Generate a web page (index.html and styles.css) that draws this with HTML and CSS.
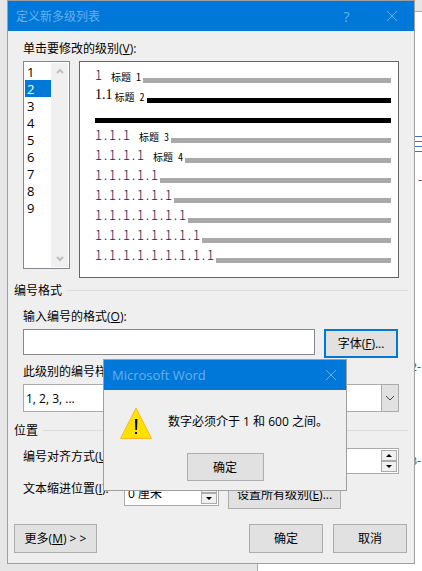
FILE: index.html
```html
<!DOCTYPE html>
<html lang="zh-CN">
<head>
<meta charset="utf-8">
<meta name="viewport" content="width=device-width, initial-scale=1">
<title>定义新多级列表</title>
<link rel="stylesheet" href="styles.css">
</head>
<body>
<div class="backdrop" aria-hidden="true">
  <div class="page-edge"></div>
  <div class="ribbon-edge"></div>
  <div class="ruled"></div>
  <span class="mark mark-1">-</span>
  <span class="mark mark-2">2-</span>
  <span class="mark mark-3">3-</span>
</div>

<main class="dialog">
  <header class="titlebar">
    <h1 class="title">定义新多级列表</h1>
    <button class="title-button help" type="button" aria-label="帮助">?</button>
    <button class="title-button" type="button" aria-label="关闭">
      <svg width="10" height="10" viewBox="0 0 10 10"><path d="M0 0L10 10M10 0L0 10" fill="none" stroke="currentColor"/></svg>
    </button>
  </header>

  <form class="content">
    <div class="group">
      <label class="label first" for="level">单击要修改的级别(<u>V</u>):</label>
      <div class="levels">
        <div class="listbox">
          <select class="list" id="level" size="9">
            <option>1</option>
            <option selected>2</option>
            <option>3</option>
            <option>4</option>
            <option>5</option>
            <option>6</option>
            <option>7</option>
            <option>8</option>
            <option>9</option>
          </select>
          <div class="scrollbar">
            <svg width="8" height="6" viewBox="0 0 8 6"><path d="M1 5L4 2L7 5" fill="none" stroke="currentColor" stroke-width="2"/></svg>
            <svg width="8" height="6" viewBox="0 0 8 6"><path d="M1 1L4 4L7 1" fill="none" stroke="currentColor" stroke-width="2"/></svg>
          </div>
        </div>
        <div class="preview">
          <div class="line"><span class="num">1</span><span class="name">标题 1</span><i class="bar"></i></div>
          <div class="line current"><span class="num">1.1</span><span class="name">标题 2</span><i class="bar"></i></div>
          <div class="line current"><i class="bar"></i></div>
          <div class="line"><span class="num">1.1.1</span><span class="name">标题 3</span><i class="bar"></i></div>
          <div class="line"><span class="num">1.1.1.1</span><span class="name">标题 4</span><i class="bar"></i></div>
          <div class="line"><span class="num">1.1.1.1.1</span><i class="bar"></i></div>
          <div class="line"><span class="num">1.1.1.1.1.1</span><i class="bar"></i></div>
          <div class="line"><span class="num">1.1.1.1.1.1.1</span><i class="bar"></i></div>
          <div class="line"><span class="num">1.1.1.1.1.1.1.1</span><i class="bar"></i></div>
          <div class="line"><span class="num">1.1.1.1.1.1.1.1.1</span><i class="bar"></i></div>
        </div>
      </div>
    </div>

    <h2 class="section">编号格式</h2>
    <div class="group">
      <label class="label" for="format">输入编号的格式(<u>O</u>):</label>
      <div class="row format">
        <input class="field grow" id="format" type="text">
        <button class="button focused" type="button">字体(<u>F</u>)...</button>
      </div>
      <label class="label" for="style">此级别的编号样式(<u>N</u>):</label>
      <div class="combo">
        <select class="combo-select" id="style"><option>1, 2, 3, ...</option></select>
        <span class="combo-arrow"><svg width="8" height="6" viewBox="0 0 8 6"><path d="M0 1L4 5L8 1" fill="none" stroke="currentColor"/></svg></span>
      </div>
    </div>

    <h2 class="section lower">位置</h2>
    <div class="group">
      <div class="row position">
        <label class="row-label" for="offset">编号对齐方式(<u>U</u>):</label>
        <div class="spinner">
          <input id="offset" type="text">
          <div class="steps">
            <button type="button" aria-label="增加"><span class="up"></span></button>
            <button type="button" aria-label="减少"><span class="down"></span></button>
          </div>
        </div>
      </div>
      <div class="row indent">
        <label class="row-label" for="indent">文本缩进位置(<u>I</u>):</label>
        <div class="spinner">
          <input id="indent" type="text" value="0 厘米">
          <div class="steps">
            <button type="button" aria-label="增加"><span class="up"></span></button>
            <button type="button" aria-label="减少"><span class="down"></span></button>
          </div>
        </div>
        <button class="button wide" type="button">设置所有级别(<u>E</u>)...</button>
      </div>
    </div>

    <footer class="footer">
      <button class="button more" type="button">更多(<u>M</u>) &gt; &gt;</button>
      <button class="button" type="button">确定</button>
      <button class="button" type="button">取消</button>
    </footer>
  </form>

  <section class="alert" role="alertdialog" aria-labelledby="alert-title" aria-describedby="alert-text">
    <header class="titlebar">
      <h2 class="title" id="alert-title">Microsoft Word</h2>
      <button class="title-button" type="button" aria-label="关闭">
        <svg width="10" height="10" viewBox="0 0 10 10"><path d="M0 0L10 10M10 0L0 10" fill="none" stroke="currentColor"/></svg>
      </button>
    </header>
    <div class="alert-body">
      <svg width="32" height="32" viewBox="0 0 32 32" aria-hidden="true">
        <path d="M16 1L31.500 31.500H.5Z" fill="#ffe100" stroke="#fdb827"/>
        <path d="M15 12h2.400l-.4 11h-1.600Z" fill="#000"/>
        <rect x="15" y="25" width="2" height="2" fill="#000"/>
      </svg>
      <p class="alert-text" id="alert-text">数字必须介于 1 和 600 之间。</p>
    </div>
    <div class="alert-actions"><button class="button" type="button">确定</button></div>
  </section>
</main>
</body>
</html>
```
FILE: styles.css
```css
* {
  box-sizing: border-box;
}

body {
  margin: 0;
  min-height: 100vh;
  position: relative;
  overflow: hidden;
  background: #fff;
  color: #000;
  font: 12px/17px "Open Sans", "Noto Sans CJK SC", sans-serif;
}

button,
input,
select {
  font: inherit;
  color: inherit;
  margin: 0;
  border-radius: 0;
}

u {
  text-underline-offset: 1px;
}

/* Document window behind the dialog */
.backdrop {
  position: absolute;
  inset: 0;
  overflow: hidden;
}

.page-edge {
  position: absolute;
  inset: 0 auto 0 0;
  width: 258px;
  background: #e6e6e6;
  border-right: 1px solid #ababab;
}

.ribbon-edge {
  position: absolute;
  inset: 0 0 auto auto;
  width: 8px;
  height: 12px;
  background: #e6e6e6;
  border-bottom: 1px solid #ababab;
}

.ruled {
  position: absolute;
  top: 136px;
  right: 0;
  width: 8px;
  height: 16px;
  background: repeating-linear-gradient(#4a6fae 0 1px, #fff 1px 5px);
}

.mark {
  position: absolute;
  left: 411px;
  color: #555;
  font-family: "Liberation Serif", serif;
}

.mark-1 { top: 172px; left: 418px; }
.mark-2 { top: 359px; }
.mark-3 { top: 453px; }

.dialog {
  position: relative;
  margin: 0 7px;
  border: 1px solid #9f9f9f;
  background: #efefef;
}

.titlebar {
  display: flex;
  align-items: center;
  height: 30px;
  padding-left: 8px;
  background: #0078d9;
  color: #67b0ea;
}

.title {
  flex: 1;
  margin: 0;
  font-size: 12px;
  font-weight: 400;
}

.alert .title {
  font-size: 13px;
}

.title-button {
  display: flex;
  align-items: center;
  justify-content: center;
  width: 45px;
  height: 30px;
  padding: 0;
  border: 0;
  background: none;
}

.help {
  font-size: 14px;
}

.content {
  padding: 9px 6px 10px;
}

.group {
  padding: 0 9px;
}

.label {
  display: block;
  margin: 9px 0 4px;
}

.label.first {
  margin-top: 0;
}

.levels {
  display: flex;
  align-items: flex-start;
  gap: 9px;
}

.listbox {
  display: flex;
  width: 47px;
  height: 208px;
  padding: 1px;
  border: 1px solid #828790;
  background: #fff;
}

.list {
  flex: 1;
  min-width: 0;
  height: 100%;
  padding: 0;
  border: 0;
  outline: 0;
  overflow: hidden;
  background: #fff;
  scrollbar-width: none;
}

.list option {
  height: 17px;
  min-height: 17px;
  padding: 0 2px;
  font-size: 13px;
  line-height: 17px;
}

.list option:checked {
  background: linear-gradient(#0078d7, #0078d7);
  -webkit-text-fill-color: #fff;
}

.scrollbar {
  display: flex;
  flex-direction: column;
  justify-content: space-between;
  align-items: center;
  width: 17px;
  padding: 5px 0;
  background: #f0f0f0;
  color: #bfbfbf;
}

.preview {
  flex: 1;
  height: 217px;
  padding: 1px 7px 0 15px;
  border: 1px solid #646464;
  background: #fff;
}

.line {
  display: flex;
  align-items: flex-end;
  gap: 2px;
  height: 20px;
}

.num,
.name {
  font-family: "Noto Sans CJK SC", sans-serif;
  font-feature-settings: "hwid";
  white-space: pre;
}

.num {
  color: #1c2450;
  font-size: 14px;
  font-weight: 300;
  line-height: 17px;
}

.name {
  margin-left: 7px;
  font-size: 10px;
  line-height: 12px;
}

.current .num {
  color: #000;
  font-family: "Liberation Serif", serif;
  font-weight: 400;
  line-height: 16px;
}

.current .name {
  margin-left: 0;
}

.bar {
  flex: 1;
  height: 5px;
  background: #a9a9a9;
}

.current .bar {
  background: #000;
}

.section {
  display: flex;
  align-items: center;
  gap: 5px;
  margin: 4px 0 9px;
  font-size: 12px;
  font-weight: 400;
}

.section::after {
  content: "";
  flex: 1;
  height: 1px;
  background: #dcdcdc;
}

.section.lower {
  margin-top: 10px;
}

.row {
  display: flex;
  align-items: flex-start;
  gap: 9px;
}

.row + .label {
  margin-top: 5px;
}

.format {
  padding-right: 1px;
}

.field {
  height: 26px;
  padding: 0 3px;
  border: 1px solid #828790;
  background: #fff;
}

.grow {
  flex: 1;
  min-width: 0;
}

.button {
  width: 74px;
  height: 29px;
  padding: 0;
  border: 1px solid #adadad;
  background: #e1e1e1;
  white-space: nowrap;
}

.button.focused {
  border: 2px solid #0078d7;
}

.button.wide {
  width: 113px;
}

.button.more {
  width: 83px;
  margin-right: auto;
}

.combo {
  position: relative;
  height: 28px;
}

.combo-select {
  width: 100%;
  height: 28px;
  padding: 0 2px;
  border: 1px solid #ababab;
  background: #fff;
  appearance: none;
}

.combo-arrow {
  position: absolute;
  inset: 0 0 0 auto;
  display: flex;
  align-items: center;
  justify-content: center;
  width: 18px;
  border: 1px solid #ababab;
  background: #e1e1e1;
  color: #444;
  pointer-events: none;
}

.row-label {
  flex: none;
  width: 92px;
  white-space: nowrap;
}

.position {
  justify-content: space-between;
  margin-bottom: 6px;
}

.spinner {
  display: flex;
  width: 95px;
  height: 26px;
  padding: 1px;
  border: 1px solid #ababab;
  background: #fff;
}

.spinner input {
  flex: 1;
  min-width: 0;
  padding: 0 2px;
  border: 0;
  background: none;
}

.steps {
  display: flex;
  flex-direction: column;
  width: 16px;
}

.steps button {
  display: flex;
  flex: 1;
  align-items: center;
  justify-content: center;
  padding: 0;
  border: 1px solid #ababab;
  background: #f0f0f0;
}

.up,
.down {
  border: 3px solid transparent;
}

.up {
  border-top: 0;
  border-bottom-color: #000;
}

.down {
  border-bottom: 0;
  border-top-color: #000;
}

.footer {
  display: flex;
  gap: 10px;
  margin-top: 15px;
  padding-right: 1px;
}

.alert {
  position: absolute;
  top: 358px;
  left: 95px;
  width: 244px;
  border: 1px solid #9f9f9f;
  background: #efefef;
}

.alert .title-button {
  width: 30px;
}

.alert-body {
  display: flex;
  gap: 16px;
  padding: 17px 16px 14px;
}

.alert-text {
  margin: 6px 0 0;
}

.alert-actions {
  display: flex;
  justify-content: center;
  padding-bottom: 9px;
}

.alert-actions .button {
  width: 77px;
  height: 28px;
}
```
